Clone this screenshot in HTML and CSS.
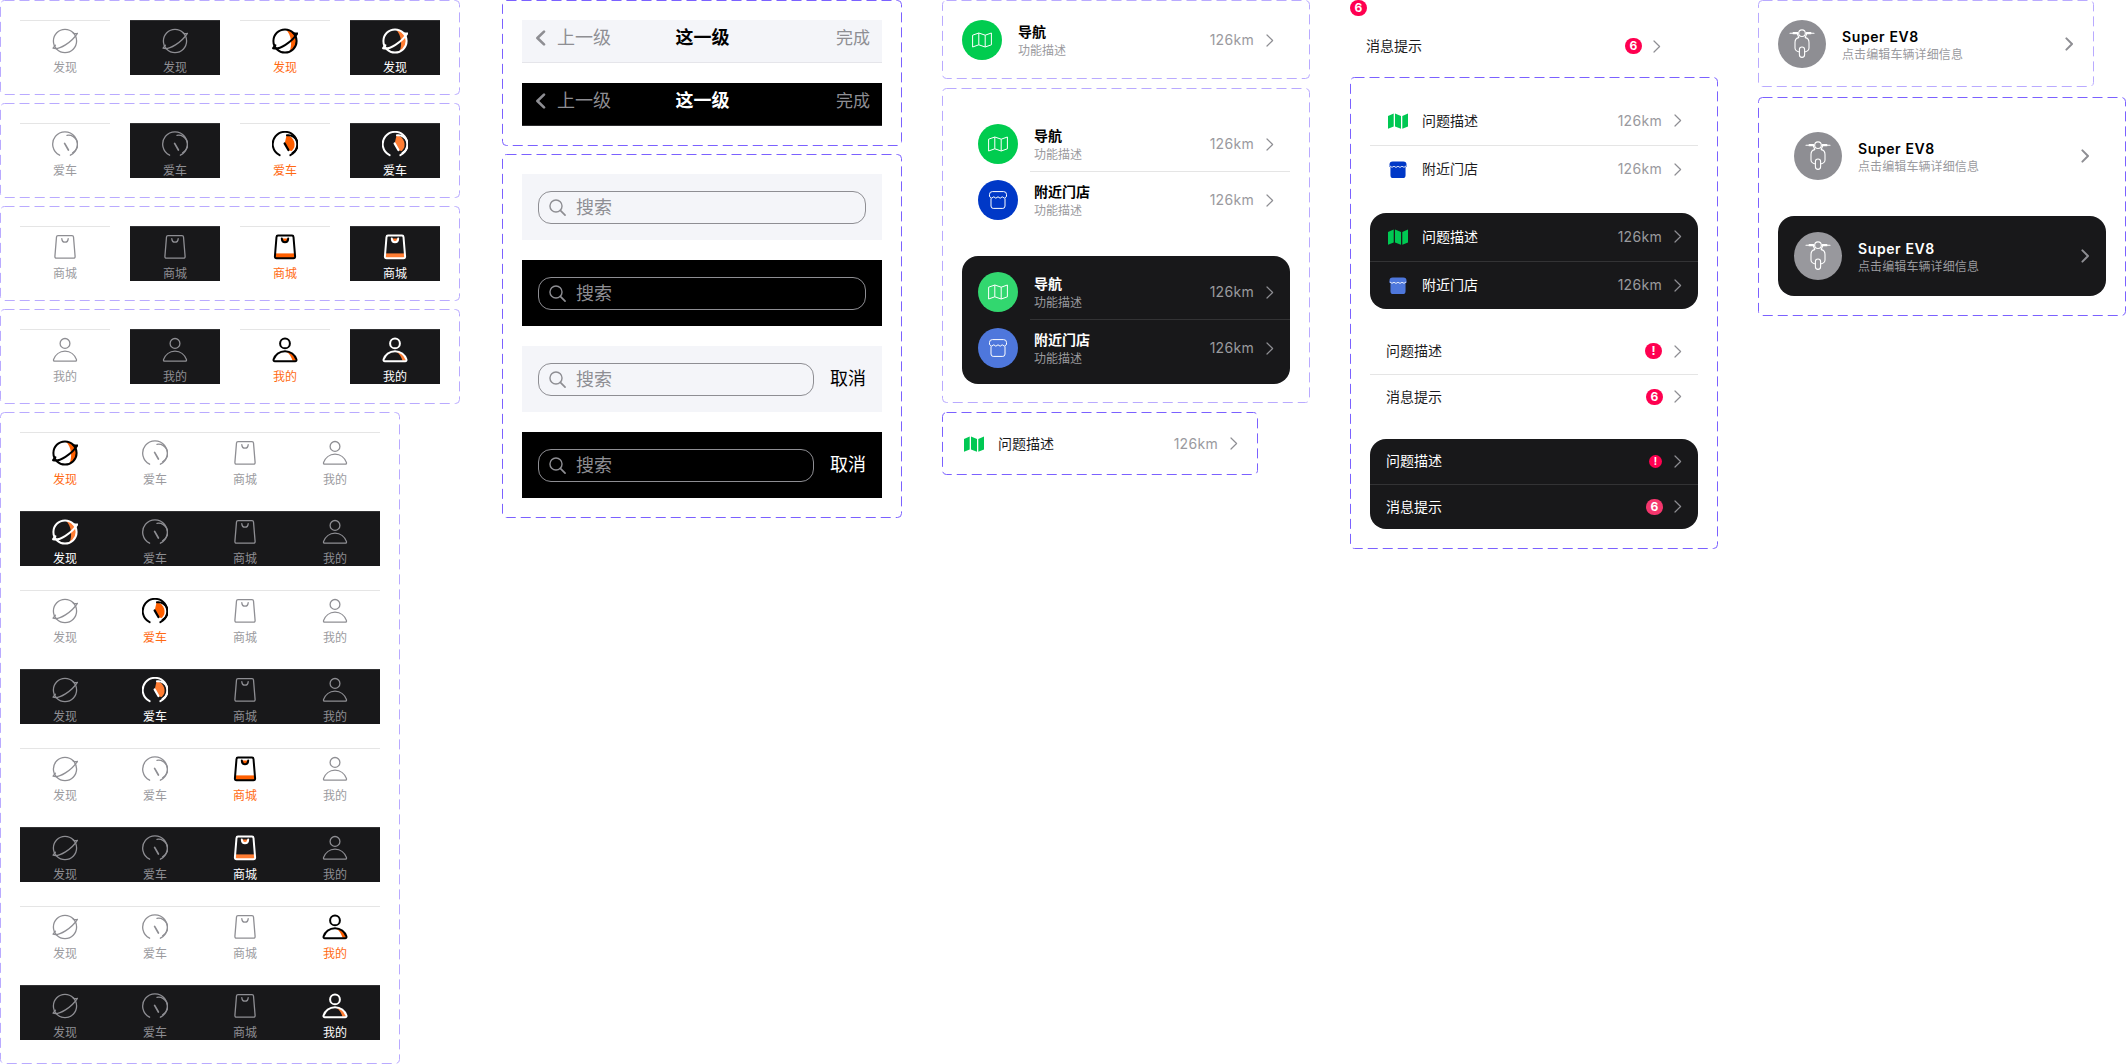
FILE: index.html
```html
<!DOCTYPE html>
<html lang="zh-CN">
<head>
<meta charset="utf-8">
<title>组件</title>
<link rel="stylesheet" href="styles.css">
</head>
<body>
<svg class="defs" aria-hidden="true">
  <symbol id="planet" viewBox="0 0 26 26">
    <path class="acc" d="M14 1.6A11.5 11.5 0 0 1 17.5 23.6C20.4 17 19.6 7.6 14 1.6Z"/>
    <circle class="st" cx="13" cy="13" r="11.6"/>
    <path class="st" d="M3.4 17.2 1.1 20.2C7 22.5 20 14 25.4 5.4 24 5.8 22.6 5.6 21.2 5"/>
  </symbol>
  <symbol id="gauge" viewBox="0 0 26 26">
    <path class="acc" d="M14.5 4.5A9 9 0 0 1 19.7 20L17 19.5 12.8 12Z"/>
    <path class="st" d="M7.6 24.2A12.3 12.3 0 1 1 18.4 24.2"/>
    <path class="st" d="M15 4.3A9.3 9.3 0 0 1 20.6 21.8"/>
    <path class="st needle" d="M12.6 12.4 16.4 19"/>
  </symbol>
  <symbol id="bag" viewBox="0 0 26 26">
    <rect class="acc" x="3.5" y="19.4" width="19" height="4.6"/>
    <path class="acc" d="M9.8 4.6Q10 8.2 13 8.2T16.2 4.6Z"/>
    <path class="st" d="M6 1.6H20Q21.4 1.6 21.5 3L23.1 22.4Q23.2 24.2 21.5 24.2H4.5Q2.8 24.2 2.9 22.4L4.5 3Q4.6 1.6 6 1.6Z"/>
    <path class="st" d="M9.8 4.6Q10 8.2 13 8.2T16.2 4.6"/>
  </symbol>
  <symbol id="person" viewBox="0 0 26 26">
    <path class="acc" d="M13 1.6A5 5 0 0 1 18 6.4 6.5 6.5 0 0 0 13 1.6Z"/>
    <path class="acc" d="M14 14.4C19 15 22.6 19 24.4 23.8H20.6C19.6 20 17.4 16.6 14 14.4Z"/>
    <circle class="st" cx="13" cy="6.4" r="4.9"/>
    <path class="st" d="M13 14.2C7.4 14.2 3.2 18 1.6 22.4 1.2 23.6 1.8 24.2 2.8 24.2H23.2C24.2 24.2 24.8 23.6 24.4 22.4 22.8 18 18.6 14.2 13 14.2Z"/>
  </symbol>
  <symbol id="map-line" viewBox="0 0 20 16">
    <path d="M.6 3.2 6.8 1 13.2 3.2 19.4 1V12.8L13.2 15 6.8 12.8.6 15ZM6.8 1V12.8M13.2 3.2V15" fill="none" stroke="#fff" stroke-width="1" stroke-linejoin="round"/>
  </symbol>
  <symbol id="store-line" viewBox="0 0 18 18">
    <path d="M3.4 .6H14.6Q17.5 .6 17.5 3.4V5.6Q15.4 8.6 13.2 5.8 11.2 8.6 9 5.8 6.8 8.6 4.8 5.8 2.6 8.6 .5 5.6V3.4Q.5 .6 3.4 .6ZM2 7.4V15Q2 17.4 4.2 17.4H13.8Q16 17.4 16 15V7.4" fill="none" stroke="#fff" stroke-width="1" stroke-linejoin="round"/>
  </symbol>
  <symbol id="map-fill" viewBox="0 0 20 16">
    <path d="M0 3 5.7 .6V13.4L0 15.8ZM7 .6 13 3V15.8L7 13.4ZM14.3 3 20 .6V13.4L14.3 15.8Z"/>
  </symbol>
  <symbol id="store-fill" viewBox="0 0 18 18">
    <path d="M3.4.4H14.6Q18 .4 18 3.6V6.4H17V15Q17 18 14 18H4Q1 18 1 15V6.4H0V3.6Q0 .4 3.4 .4Z"/>
    <path d="M.4 5.2Q2.6 8 4.8 5.6 6.8 8 9 5.6 11.2 8 13.2 5.6 15.4 8 17.6 5.2" fill="none" stroke="#fff" stroke-width=".9"/>
  </symbol>
  <symbol id="scooter" viewBox="0 0 26 30">
    <g fill="none" stroke="#fff" stroke-width="1.1" stroke-linecap="round" stroke-linejoin="round">
      <path d="M1 4.2H9M17 4.2H25"/>
      <path d="M4.2 3.6H8.6V4.8H4.2ZM17.4 3.6H21.8V4.8H17.4Z"/>
      <circle cx="13" cy="4.2" r="3.3"/>
      <path d="M8.4 5 9.8 8.6Q6 9.2 6 13.5V19Q6 22 10.4 23M17.6 5 16.2 8.6Q20 9.2 20 13.5V19Q20 22 15.6 23"/>
      <rect x="10.4" y="18" width="5.2" height="10.4" rx="2.6"/>
    </g>
  </symbol>
  <symbol id="search" viewBox="0 0 18 18">
    <circle cx="7.4" cy="7.4" r="6.4" fill="none" stroke="currentColor" stroke-width="1.5"/>
    <path d="M12 12 17 17" fill="none" stroke="currentColor" stroke-width="1.8" stroke-linecap="round"/>
  </symbol>
  <symbol id="chev" viewBox="0 0 8 13">
    <path d="M1 1 6.6 6.5 1 12" fill="none" stroke="currentColor" stroke-width="1.2" stroke-linecap="round" stroke-linejoin="round"/>
  </symbol>
  <symbol id="chev-bold" viewBox="0 0 9 14">
    <path d="M1.4 1.4 7 7 1.4 12.6" fill="none" stroke="currentColor" stroke-width="2" stroke-linecap="round" stroke-linejoin="round"/>
  </symbol>
  <symbol id="back" viewBox="0 0 11 16">
    <path d="M9 1.6 2.4 8 9 14.4" fill="none" stroke="currentColor" stroke-width="2.6" stroke-linecap="round" stroke-linejoin="round"/>
  </symbol>
</svg>

<main class="canvas">

  <section class="frame soft f-t1">
    <svg class="dash"><rect/></svg>
    <div class="singles">
      <div class="bar"><div class="tab"><svg class="ic"><use href="#planet"/></svg><span>发现</span></div></div>
      <div class="bar dark"><div class="tab"><svg class="ic"><use href="#planet"/></svg><span>发现</span></div></div>
      <div class="bar"><div class="tab on"><svg class="ic"><use href="#planet"/></svg><span>发现</span></div></div>
      <div class="bar dark"><div class="tab on"><svg class="ic"><use href="#planet"/></svg><span>发现</span></div></div>
    </div>
  </section>
  <section class="frame soft f-t2">
    <svg class="dash"><rect/></svg>
    <div class="singles">
      <div class="bar"><div class="tab"><svg class="ic"><use href="#gauge"/></svg><span>爱车</span></div></div>
      <div class="bar dark"><div class="tab"><svg class="ic"><use href="#gauge"/></svg><span>爱车</span></div></div>
      <div class="bar"><div class="tab on"><svg class="ic"><use href="#gauge"/></svg><span>爱车</span></div></div>
      <div class="bar dark"><div class="tab on"><svg class="ic"><use href="#gauge"/></svg><span>爱车</span></div></div>
    </div>
  </section>
  <section class="frame soft f-t3">
    <svg class="dash"><rect/></svg>
    <div class="singles">
      <div class="bar"><div class="tab"><svg class="ic"><use href="#bag"/></svg><span>商城</span></div></div>
      <div class="bar dark"><div class="tab"><svg class="ic"><use href="#bag"/></svg><span>商城</span></div></div>
      <div class="bar"><div class="tab on"><svg class="ic"><use href="#bag"/></svg><span>商城</span></div></div>
      <div class="bar dark"><div class="tab on"><svg class="ic"><use href="#bag"/></svg><span>商城</span></div></div>
    </div>
  </section>
  <section class="frame soft f-t4">
    <svg class="dash"><rect/></svg>
    <div class="singles">
      <div class="bar"><div class="tab"><svg class="ic"><use href="#person"/></svg><span>我的</span></div></div>
      <div class="bar dark"><div class="tab"><svg class="ic"><use href="#person"/></svg><span>我的</span></div></div>
      <div class="bar"><div class="tab on"><svg class="ic"><use href="#person"/></svg><span>我的</span></div></div>
      <div class="bar dark"><div class="tab on"><svg class="ic"><use href="#person"/></svg><span>我的</span></div></div>
    </div>
  </section>

  <section class="frame soft f-bars">
    <svg class="dash"><rect/></svg>
    <div class="bar full">
      <div class="tab on"><svg class="ic"><use href="#planet"/></svg><span>发现</span></div>
      <div class="tab"><svg class="ic"><use href="#gauge"/></svg><span>爱车</span></div>
      <div class="tab"><svg class="ic"><use href="#bag"/></svg><span>商城</span></div>
      <div class="tab"><svg class="ic"><use href="#person"/></svg><span>我的</span></div>
    </div>
    <div class="bar full dark">
      <div class="tab on"><svg class="ic"><use href="#planet"/></svg><span>发现</span></div>
      <div class="tab"><svg class="ic"><use href="#gauge"/></svg><span>爱车</span></div>
      <div class="tab"><svg class="ic"><use href="#bag"/></svg><span>商城</span></div>
      <div class="tab"><svg class="ic"><use href="#person"/></svg><span>我的</span></div>
    </div>
    <div class="bar full">
      <div class="tab"><svg class="ic"><use href="#planet"/></svg><span>发现</span></div>
      <div class="tab on"><svg class="ic"><use href="#gauge"/></svg><span>爱车</span></div>
      <div class="tab"><svg class="ic"><use href="#bag"/></svg><span>商城</span></div>
      <div class="tab"><svg class="ic"><use href="#person"/></svg><span>我的</span></div>
    </div>
    <div class="bar full dark">
      <div class="tab"><svg class="ic"><use href="#planet"/></svg><span>发现</span></div>
      <div class="tab on"><svg class="ic"><use href="#gauge"/></svg><span>爱车</span></div>
      <div class="tab"><svg class="ic"><use href="#bag"/></svg><span>商城</span></div>
      <div class="tab"><svg class="ic"><use href="#person"/></svg><span>我的</span></div>
    </div>
    <div class="bar full">
      <div class="tab"><svg class="ic"><use href="#planet"/></svg><span>发现</span></div>
      <div class="tab"><svg class="ic"><use href="#gauge"/></svg><span>爱车</span></div>
      <div class="tab on"><svg class="ic"><use href="#bag"/></svg><span>商城</span></div>
      <div class="tab"><svg class="ic"><use href="#person"/></svg><span>我的</span></div>
    </div>
    <div class="bar full dark">
      <div class="tab"><svg class="ic"><use href="#planet"/></svg><span>发现</span></div>
      <div class="tab"><svg class="ic"><use href="#gauge"/></svg><span>爱车</span></div>
      <div class="tab on"><svg class="ic"><use href="#bag"/></svg><span>商城</span></div>
      <div class="tab"><svg class="ic"><use href="#person"/></svg><span>我的</span></div>
    </div>
    <div class="bar full">
      <div class="tab"><svg class="ic"><use href="#planet"/></svg><span>发现</span></div>
      <div class="tab"><svg class="ic"><use href="#gauge"/></svg><span>爱车</span></div>
      <div class="tab"><svg class="ic"><use href="#bag"/></svg><span>商城</span></div>
      <div class="tab on"><svg class="ic"><use href="#person"/></svg><span>我的</span></div>
    </div>
    <div class="bar full dark">
      <div class="tab"><svg class="ic"><use href="#planet"/></svg><span>发现</span></div>
      <div class="tab"><svg class="ic"><use href="#gauge"/></svg><span>爱车</span></div>
      <div class="tab"><svg class="ic"><use href="#bag"/></svg><span>商城</span></div>
      <div class="tab on"><svg class="ic"><use href="#person"/></svg><span>我的</span></div>
    </div>
  </section>

  <section class="frame strong f-nav">
    <svg class="dash"><rect/></svg>
    <div class="nav">
      <div class="nav-l"><svg class="back"><use href="#back"/></svg><span>上一级</span></div>
      <strong class="nav-t">这一级</strong>
      <div class="nav-r">完成</div>
    </div>
    <div class="nav black">
      <div class="nav-l"><svg class="back"><use href="#back"/></svg><span>上一级</span></div>
      <strong class="nav-t">这一级</strong>
      <div class="nav-r">完成</div>
    </div>
  </section>

  <section class="frame strong f-search">
    <svg class="dash"><rect/></svg>
    <div class="sbar">
      <div class="field"><svg class="sicon"><use href="#search"/></svg><span>搜索</span></div>
    </div>
    <div class="sbar black">
      <div class="field"><svg class="sicon"><use href="#search"/></svg><span>搜索</span></div>
    </div>
    <div class="sbar">
      <div class="field"><svg class="sicon"><use href="#search"/></svg><span>搜索</span></div>
      <span class="cancel">取消</span>
    </div>
    <div class="sbar black">
      <div class="field"><svg class="sicon"><use href="#search"/></svg><span>搜索</span></div>
      <span class="cancel">取消</span>
    </div>
  </section>

  <section class="frame soft f-la">
    <svg class="dash"><rect/></svg>
    <div class="frow">
      <div class="disc green"><svg class="dm"><use href="#map-line"/></svg></div>
      <div class="txt"><b>导航</b><small>功能描述</small></div>
      <div class="meta"><span class="km">126km</span><svg class="chev"><use href="#chev"/></svg></div>
    </div>
  </section>

  <section class="frame soft f-lb">
    <svg class="dash"><rect/></svg>
    <div class="card">
      <div class="frow">
        <div class="disc green"><svg class="dm"><use href="#map-line"/></svg></div>
        <div class="txt"><b>导航</b><small>功能描述</small></div>
        <div class="meta"><span class="km">126km</span><svg class="chev"><use href="#chev"/></svg></div>
      </div>
      <div class="sep inset"></div>
      <div class="frow">
        <div class="disc blue"><svg class="ds"><use href="#store-line"/></svg></div>
        <div class="txt"><b>附近门店</b><small>功能描述</small></div>
        <div class="meta"><span class="km">126km</span><svg class="chev"><use href="#chev"/></svg></div>
      </div>
    </div>
    <div class="card night">
      <div class="frow">
        <div class="disc green"><svg class="dm"><use href="#map-line"/></svg></div>
        <div class="txt"><b>导航</b><small>功能描述</small></div>
        <div class="meta"><span class="km">126km</span><svg class="chev"><use href="#chev"/></svg></div>
      </div>
      <div class="sep inset"></div>
      <div class="frow">
        <div class="disc blue"><svg class="ds"><use href="#store-line"/></svg></div>
        <div class="txt"><b>附近门店</b><small>功能描述</small></div>
        <div class="meta"><span class="km">126km</span><svg class="chev"><use href="#chev"/></svg></div>
      </div>
    </div>
  </section>

  <section class="frame strong f-lc">
    <svg class="dash"><rect/></svg>
    <div class="irow solo">
      <svg class="gl g-map"><use href="#map-fill"/></svg>
      <span class="lab">问题描述</span>
      <div class="meta"><span class="km">126km</span><svg class="chev"><use href="#chev"/></svg></div>
    </div>
  </section>

  <span class="badge f-dot">6</span>
  <section class="frame f-msg">
    <div class="srow">
      <span class="lab">消息提示</span>
      <span class="badge">6</span>
      <svg class="chev"><use href="#chev"/></svg>
    </div>
  </section>

  <section class="frame strong f-le">
    <svg class="dash"><rect/></svg>
    <div class="rows">
      <div class="irow">
        <svg class="gl g-map"><use href="#map-fill"/></svg>
        <span class="lab">问题描述</span>
        <div class="meta"><span class="km">126km</span><svg class="chev"><use href="#chev"/></svg></div>
      </div>
      <div class="sep"></div>
      <div class="irow">
        <svg class="gl g-store"><use href="#store-fill"/></svg>
        <span class="lab">附近门店</span>
        <div class="meta"><span class="km">126km</span><svg class="chev"><use href="#chev"/></svg></div>
      </div>
    </div>
    <div class="rows night">
      <div class="irow">
        <svg class="gl g-map"><use href="#map-fill"/></svg>
        <span class="lab">问题描述</span>
        <div class="meta"><span class="km">126km</span><svg class="chev"><use href="#chev"/></svg></div>
      </div>
      <div class="sep"></div>
      <div class="irow">
        <svg class="gl g-store"><use href="#store-fill"/></svg>
        <span class="lab">附近门店</span>
        <div class="meta"><span class="km">126km</span><svg class="chev"><use href="#chev"/></svg></div>
      </div>
    </div>
    <div class="rows plain">
      <div class="srow">
        <span class="lab">问题描述</span>
        <span class="badge alert">!</span>
        <svg class="chev"><use href="#chev"/></svg>
      </div>
      <div class="sep"></div>
      <div class="srow">
        <span class="lab">消息提示</span>
        <span class="badge">6</span>
        <svg class="chev"><use href="#chev"/></svg>
      </div>
    </div>
    <div class="rows plain night">
      <div class="srow">
        <span class="lab">问题描述</span>
        <span class="badge alert">!</span>
        <svg class="chev"><use href="#chev"/></svg>
      </div>
      <div class="sep"></div>
      <div class="srow">
        <span class="lab">消息提示</span>
        <span class="badge">6</span>
        <svg class="chev"><use href="#chev"/></svg>
      </div>
    </div>
  </section>

  <section class="frame soft f-va">
    <svg class="dash"><rect/></svg>
    <div class="vrow">
      <div class="vdisc"><svg class="scoot"><use href="#scooter"/></svg></div>
      <div class="vtxt"><b>Super EV8</b><small>点击编辑车辆详细信息</small></div>
      <svg class="vchev"><use href="#chev-bold"/></svg>
    </div>
  </section>

  <section class="frame strong f-vb">
    <svg class="dash"><rect/></svg>
    <div class="vcard">
      <div class="vdisc"><svg class="scoot"><use href="#scooter"/></svg></div>
      <div class="vtxt"><b>Super EV8</b><small>点击编辑车辆详细信息</small></div>
      <svg class="vchev"><use href="#chev-bold"/></svg>
    </div>
    <div class="vcard night">
      <div class="vdisc"><svg class="scoot"><use href="#scooter"/></svg></div>
      <div class="vtxt"><b>Super EV8</b><small>点击编辑车辆详细信息</small></div>
      <svg class="vchev"><use href="#chev-bold"/></svg>
    </div>
  </section>

</main>
</body>
</html>
```
FILE: styles.css
```css
* { box-sizing: border-box; }
html, body { margin: 0; padding: 0; background: #fff; }
body {
  font-family: "Inter", "Noto Sans CJK SC", sans-serif;
  color: #1c1c1e;
  overflow: hidden;
}
.defs { position: absolute; width: 0; height: 0; overflow: hidden; }
.canvas { position: relative; width: 2126px; height: 1064px; overflow: hidden; }

/* design-canvas frames: their place on the board is the content */
.frame { position: absolute; display: flex; flex-direction: column; }
.dash { position: absolute; inset: 0; width: 100%; height: 100%; pointer-events: none; }
.dash rect {
  x: .5px; y: .5px;
  width: calc(100% - 1px); height: calc(100% - 1px);
  rx: 4px;
  fill: none;
  stroke-width: 1;
  stroke-dasharray: 10 5;
}
.soft .dash rect { stroke: #b9aaff; }
.strong .dash rect { stroke: #7b61ff; }

.f-t1 { left: 0; top: 0; width: 460px; height: 95px; padding: 20px; }
.f-t2 { left: 0; top: 103px; width: 460px; height: 95px; padding: 20px; }
.f-t3 { left: 0; top: 206px; width: 460px; height: 95px; padding: 20px; }
.f-t4 { left: 0; top: 309px; width: 460px; height: 95px; padding: 20px; }
.f-bars { left: 0; top: 412px; width: 400px; height: 652px; padding: 20px; gap: 24px; }
.f-nav { left: 502px; top: 0; width: 400px; height: 146px; padding: 20px; gap: 20px; }
.f-search { left: 502px; top: 154px; width: 400px; height: 364px; padding: 20px; gap: 20px; }
.f-la { left: 942px; top: 0; width: 368px; height: 79px; padding: 20px 36px 0 20px; }
.f-lb { left: 942px; top: 88px; width: 368px; height: 315px; padding: 20px; gap: 20px; }
.f-lc { left: 942px; top: 412px; width: 316px; height: 63px; }
.f-dot { position: absolute; left: 1350px; top: 0; }
.f-msg { left: 1350px; top: 26px; width: 327px; height: 40px; }
.f-le { left: 1350px; top: 77px; width: 368px; height: 472px; padding: 20px; gap: 20px; }
.f-va { left: 1758px; top: 0; width: 336px; height: 87px; padding: 20px 20px 0; }
.f-vb { left: 1758px; top: 97px; width: 368px; height: 219px; padding: 19px 20px 0; gap: 20px; }

/* tab bars */
.singles { display: flex; gap: 20px; }
.bar {
  flex: none;
  width: 90px;
  height: 55px;
  border-top: 1px solid #e5e5e5;
  overflow: hidden;
}
.bar.full { width: 360px; display: grid; grid-template-columns: repeat(4, 90px); }
.bar.dark { background: #18181a; border-top-color: #323234; }
.tab {
  --sw: 1.3;
  --nw: 1.7;
  --acc: none;
  display: flex;
  flex-direction: column;
  align-items: center;
  padding-top: 7px;
  color: #8e8e93;
}
.ic { display: block; width: 26px; height: 26px; color: #8e8e93; overflow: visible; }
.tab span { margin-top: 6px; font-size: 12px; line-height: 15px; color: #9a9a9e; }
.dark .tab span { color: #8e8e93; }
.tab.on { --sw: 2; --nw: 2.2; --acc: #ff5f00; }
.tab.on .ic { color: #000; }
.tab.on span { color: #ff6a13; }
.dark .tab.on { --acc: #ff7d33; }
.dark .tab.on .ic { color: #fff; }
.dark .tab.on span { color: #fff; }
.st { fill: none; stroke: currentColor; stroke-width: var(--sw); stroke-linecap: round; stroke-linejoin: round; }
.needle { stroke-width: var(--nw); }
.acc { fill: var(--acc); stroke: none; }

/* nav bars */
.nav {
  flex: none;
  display: grid;
  grid-template-columns: 1fr auto 1fr;
  align-items: center;
  height: 43px;
  padding: 0 12px 6px 13px;
  background: #f4f5f9;
  border-bottom: 1px solid #e5e5ea;
  font-size: 18px;
  line-height: 24px;
  color: #8e8e93;
}
.nav.black { background: #000; border-bottom-color: #2c2c2e; }
.nav-l { display: flex; align-items: center; gap: 11px; }
.back { width: 11px; height: 16px; color: #8e8e93; }
.nav-t { font-weight: 700; color: #000; }
.nav.black .nav-t { color: #fff; }
.nav-r { text-align: right; font-size: 17px; }

/* search bars */
.sbar {
  display: flex;
  align-items: center;
  gap: 16px;
  flex: none;
  height: 66px;
  padding: 0 16px;
  background: #f4f5f9;
}
.sbar.black { background: #000; }
.field {
  flex: 1;
  display: flex;
  align-items: center;
  gap: 10px;
  height: 33px;
  padding-left: 10px;
  border: 1px solid #8e8e93;
  border-radius: 13px;
  font-size: 18px;
  color: #8e8e93;
}
.field span { margin-top: -2px; }
.sicon { width: 17px; height: 17px; color: #8e8e93; }
.cancel { font-size: 18px; line-height: 24px; color: #000; }
.black .cancel { color: #fff; }

/* disc lists */
.frow { display: flex; align-items: center; gap: 16px; height: 40px; }
.disc { flex: none; display: flex; align-items: center; justify-content: center; width: 40px; height: 40px; border-radius: 50%; }
.disc.green { background: #00cc4f; }
.disc.blue { background: #0038c7; }
.night .disc.green { background: #32d76f; }
.night .disc.blue { background: #4e77dc; }
.dm { width: 20px; height: 16px; }
.ds { width: 18px; height: 18px; }
.txt { flex: 1; display: flex; flex-direction: column; }
.txt b { font-size: 14px; line-height: 20px; font-weight: 600; color: #000; }
.txt small { margin-top: 1px; font-size: 12px; line-height: 16px; color: #9a9a9e; }
.meta { display: flex; align-items: center; gap: 12px; }
.km { font-size: 14px; line-height: 20px; letter-spacing: .3px; color: #9a9a9e; }
.chev { flex: none; width: 8px; height: 13px; color: #8e8e93; }
.card { flex: none; display: flex; flex-direction: column; height: 128px; padding: 16px; border-radius: 16px; background: #fff; }
.card .sep.inset { margin: 7px -16px 8px 52px; }
.sep { flex: none; height: 1px; background: #e5e5e5; }
.night { background: #18181a; }
.night .sep { background: #333335; }
.night .txt b { color: #fff; }
.night .lab { color: #fff; }

/* icon + text rows */
.rows { flex: none; display: flex; flex-direction: column; height: 96px; border-radius: 16px; }
.irow { flex: 1; display: flex; align-items: center; padding: 0 16px 0 18px; }
.irow.solo { padding: 0 20px 0 22px; }
.gl { flex: none; width: 20px; height: 16px; margin-right: 14px; }
.g-map { fill: #00c853; }
.g-store { height: 17px; fill: #0038c7; }
.night .g-store { fill: #4e77dc; }
.lab { flex: 1; font-size: 14px; line-height: 20px; color: #1c1c1e; }
.srow { flex: 1; display: flex; align-items: center; height: 40px; padding: 0 16px; }
.rows.plain { height: 90px; }
.srow .chev { margin-left: 11px; }
.badge {
  display: flex;
  align-items: center;
  justify-content: center;
  flex: none;
  width: 17px;
  height: 16px;
  border-radius: 8px;
  background: #ff0050;
  color: #fff;
  font-size: 12px;
  line-height: 16px;
  font-weight: 700;
}
.night .badge { background: #f4366d; }
.badge.alert { margin-right: 1px; }
.night .badge.alert { width: 13px; height: 13px; font-size: 10px; margin-right: 1px; background: #ff0050; }

/* vehicle rows */
.vrow, .vcard { display: flex; align-items: center; gap: 16px; }
.vrow { height: 48px; }
.vcard { height: 80px; padding: 0 16px; border-radius: 16px; flex: none; }
.vdisc { flex: none; display: flex; align-items: center; justify-content: center; width: 48px; height: 48px; border-radius: 50%; background: #8e8e93; }
.night .vdisc { background: #98989d; }
.scoot { width: 26px; height: 30px; }
.vtxt { flex: 1; display: flex; flex-direction: column; padding-top: 1px; }
.vtxt b { font-size: 14px; line-height: 20px; font-weight: 600; letter-spacing: .6px; color: #000; }
.vtxt small { font-size: 12px; line-height: 16px; letter-spacing: .1px; color: #9a9a9e; }
.night .vtxt b { color: #fff; }
.vchev { flex: none; width: 9px; height: 14px; color: #8e8e93; }
```
